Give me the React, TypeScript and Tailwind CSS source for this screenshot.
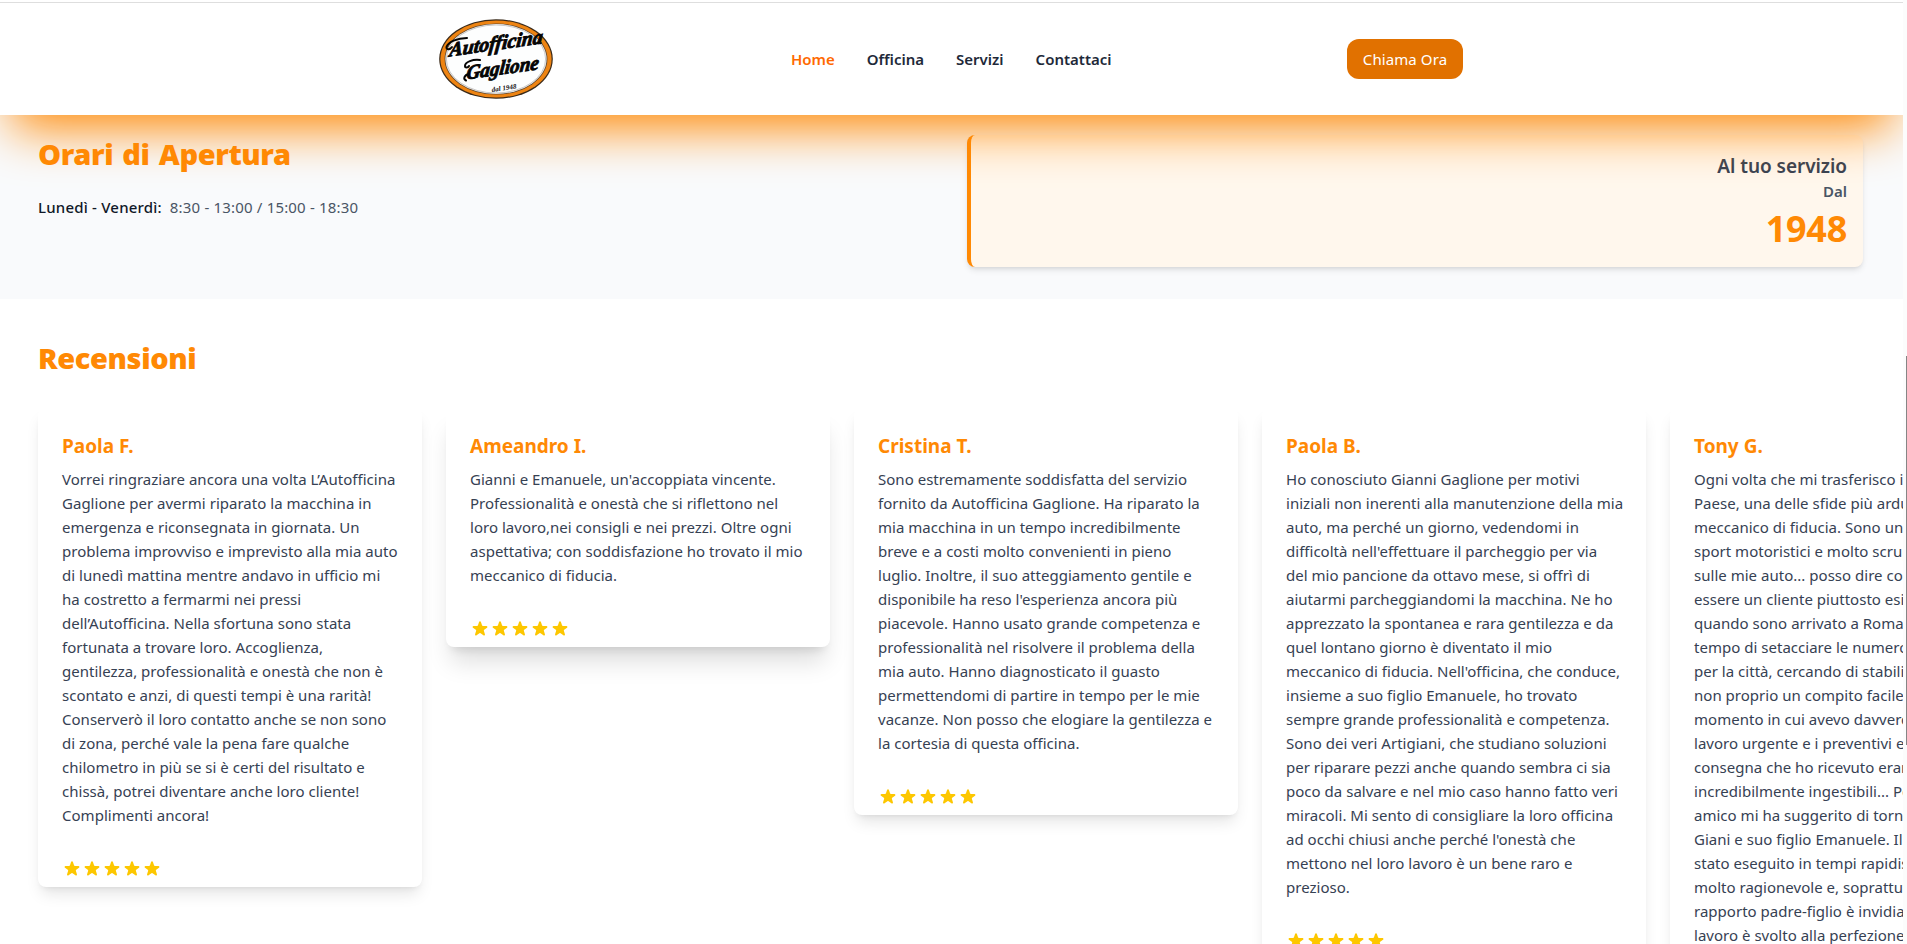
import React from "react";

const ORANGE = "text-[#ff8904]";

const reviews = [
  {
    name: "Paola F.",
    shadow: "shadow-lg",
    lines: [
      "Vorrei ringraziare ancora una volta L’Autofficina",
      "Gaglione per avermi riparato la macchina in",
      "emergenza e riconsegnata in giornata. Un",
      "problema improvviso e imprevisto alla mia auto",
      "di lunedì mattina mentre andavo in ufficio mi",
      "ha costretto a fermarmi nei pressi",
      "dell’Autofficina. Nella sfortuna sono stata",
      "fortunata a trovare loro. Accoglienza,",
      "gentilezza, professionalità e onestà che non è",
      "scontato e anzi, di questi tempi è una rarità!",
      "Conserverò il loro contatto anche se non sono",
      "di zona, perché vale la pena fare qualche",
      "chilometro in più se si è certi del risultato e",
      "chissà, potrei diventare anche loro cliente!",
      "Complimenti ancora!",
    ],
  },
  {
    name: "Ameandro I.",
    shadow: "shadow-[0_20px_25px_-5px_rgb(0_0_0/0.13),0_8px_10px_-6px_rgb(0_0_0/0.12)]",
    lines: [
      "Gianni e Emanuele, un'accoppiata vincente.",
      "Professionalità e onestà che si riflettono nel",
      "loro lavoro,nei consigli e nei prezzi. Oltre ogni",
      "aspettativa; con soddisfazione ho trovato il mio",
      "meccanico di fiducia.",
    ],
  },
  {
    name: "Cristina T.",
    shadow: "shadow-lg",
    lines: [
      "Sono estremamente soddisfatta del servizio",
      "fornito da Autofficina Gaglione. Ha riparato la",
      "mia macchina in un tempo incredibilmente",
      "breve e a costi molto convenienti in pieno",
      "luglio. Inoltre, il suo atteggiamento gentile e",
      "disponibile ha reso l'esperienza ancora più",
      "piacevole. Hanno usato grande competenza e",
      "professionalità nel risolvere il problema della",
      "mia auto. Hanno diagnosticato il guasto",
      "permettendomi di partire in tempo per le mie",
      "vacanze. Non posso che elogiare la gentilezza e",
      "la cortesia di questa officina.",
    ],
  },
  {
    name: "Paola B.",
    shadow: "shadow-lg",
    lines: [
      "Ho conosciuto Gianni Gaglione per motivi",
      "iniziali non inerenti alla manutenzione della mia",
      "auto, ma perché un giorno, vedendomi in",
      "difficoltà nell'effettuare il parcheggio per via",
      "del mio pancione da ottavo mese, si offrì di",
      "aiutarmi parcheggiandomi la macchina. Ne ho",
      "apprezzato la spontanea e rara gentilezza e da",
      "quel lontano giorno è diventato il mio",
      "meccanico di fiducia. Nell'officina, che conduce,",
      "insieme a suo figlio Emanuele, ho trovato",
      "sempre grande professionalità e competenza.",
      "Sono dei veri Artigiani, che studiano soluzioni",
      "per riparare pezzi anche quando sembra ci sia",
      "poco da salvare e nel mio caso hanno fatto veri",
      "miracoli. Mi sento di consigliare la loro officina",
      "ad occhi chiusi anche perché l'onestà che",
      "mettono nel loro lavoro è un bene raro e",
      "prezioso.",
    ],
  },
  {
    name: "Tony G.",
    shadow: "shadow-lg",
    lines: [
      "Ogni volta che mi trasferisco in un nuovo",
      "Paese, una delle sfide più ardue è trovare un",
      "meccanico di fiducia. Sono un amante degli",
      "sport motoristici e molto scrupoloso",
      "sulle mie auto... posso dire con certezza di",
      "essere un cliente piuttosto esigente",
      "quando sono arrivato a Roma non ho avuto",
      "tempo di setacciare le numerose officine",
      "per la città, cercando di stabilire un contatto",
      "non proprio un compito facile. In un",
      "momento in cui avevo davvero bisogno di un",
      "lavoro urgente e i preventivi e i tempi di",
      "consegna che ho ricevuto erano",
      "incredibilmente ingestibili... Per fortuna un",
      "amico mi ha suggerito di tornare da",
      "Giani e suo figlio Emanuele. Il lavoro è",
      "stato eseguito in tempi rapidissimi, a costo",
      "molto ragionevole e, soprattutto, il",
      "rapporto padre-figlio è invidiabile e il",
      "lavoro è svolto alla perfezione.",
    ],
  },
];

function Star() {
  return (
    <svg viewBox="0 0 20 20" className="size-5 fill-[#fdc700]">
      <path d="M9.049 2.927c.3-.921 1.603-.921 1.902 0l1.07 3.292a1 1 0 00.95.69h3.462c.969 0 1.371 1.24.588 1.81l-2.8 2.034a1 1 0 00-.364 1.118l1.07 3.292c.3.921-.755 1.688-1.54 1.118l-2.8-2.034a1 1 0 00-1.175 0l-2.8 2.034c-.784.57-1.838-.197-1.539-1.118l1.07-3.292a1 1 0 00-.364-1.118L2.98 8.72c-.783-.57-.38-1.81.588-1.81h3.461a1 1 0 00.951-.69l1.07-3.292z" />
    </svg>
  );
}

function Logo() {
  return (
    <svg viewBox="0 0 114 80" className="h-20 w-[114px]" fontFamily="'Liberation Serif', serif" fontWeight="700" fontStyle="italic">
      <ellipse cx="57" cy="40" rx="56.8" ry="39.8" fill="#3a2a1a" />
      <ellipse cx="57" cy="40" rx="55.6" ry="38.6" fill="#ee8412" />
      <ellipse cx="57" cy="40" rx="51.4" ry="35.6" fill="#5c4630" />
      <ellipse cx="57" cy="40" rx="50.6" ry="34.9" fill="#f4f2f0" />
      <ellipse cx="57" cy="40" rx="49.6" ry="34" fill="#fdfefe" stroke="#9a9a9a" strokeWidth="0.5" />
      <g fill="#050505" stroke="#050505" strokeWidth="0.9">
        <text fontSize="20" textLength="94" lengthAdjust="spacingAndGlyphs" transform="translate(10 37.5) rotate(-8) skewX(-14)">Autofficina</text>
        <text fontSize="20" textLength="73" lengthAdjust="spacingAndGlyphs" transform="translate(27 60.5) rotate(-8) skewX(-14)">Gaglione</text>
      </g>
      <g fill="none" stroke="#050505" strokeWidth="2" strokeLinecap="round">
        <path d="M28 19C18 19 9 23 7.500 28C7 31 11 31 13 28" />
        <path d="M41 41C34 40 26 43 26 47C26 49 29 49 30 47" />
        <path d="M30 55C25 56 24 60 27 61.500" />
      </g>
      <text fontSize="7" fill="#111" textLength="25" transform="translate(53 73) rotate(-8)">dal 1948</text>
    </svg>
  );
}

export default function App() {
  return (
    <div className="flex h-[944px] w-[1907px] overflow-hidden bg-white font-['Noto_Sans','Open_Sans',sans-serif] text-[15px]">
      <div className="flex h-full w-[1903px] flex-col overflow-hidden">
        <header className="relative z-10 flex h-[115px] shrink-0 flex-col bg-white pt-0.5 shadow-[0_25px_50px_-12px_#ff8904]">
          <div className="h-px bg-[#dedede]" />
          <div className="flex h-28 items-center pl-[439px]">
            <div className="w-[352px]">
              <Logo />
            </div>
            <nav className="flex w-[556px] items-center gap-8 font-semibold text-[#1e2939]">
              <a className="text-[#ff6900]">Home</a>
              <a>Officina</a>
              <a>Servizi</a>
              <a>Contattaci</a>
            </nav>
            <button className="h-10 w-[116px] rounded-xl bg-[#e17100] tracking-[0.1px] whitespace-nowrap text-white">Chiama Ora</button>
          </div>
        </header>

        <section className="grid h-[184px] shrink-0 grid-cols-2 gap-8 bg-[#f9fafc] pt-5 pr-10 pb-8 pl-[38px]">
          <div className="-mt-px">
            <h2 className={`text-[29px] leading-10 font-black tracking-[-0.4px] [word-spacing:2px] ${ORANGE}`}>Orari di Apertura</h2>
            <p className="mt-[21px] leading-6 text-[#4a5565]">
              <span className="mr-2 font-medium tracking-[0.2px] text-[#101828]">Lunedì - Venerdì:</span>
              <span className="tracking-[0.18px]">8:30 - 13:00 / 15:00 - 18:30</span>
            </p>
          </div>
          <div className="flex flex-col items-end rounded-lg border-l-4 border-[#ff8904] bg-[#fff7ed] p-4 shadow-md">
            <p className="mt-px text-[19px] leading-7 font-semibold tracking-[-0.05px] text-[#364153]">Al tuo servizio</p>
            <p className="-mt-px leading-6 font-semibold text-[#4a5565]">Dal</p>
            <p className={`mt-1.5 text-4xl leading-10 font-bold tracking-[-0.25px] ${ORANGE}`}>1948</p>
          </div>
        </section>

        <section className="flex min-h-0 flex-1 flex-col pt-[39px] pl-[38px]">
          <h2 className={`text-[29px] leading-10 font-black tracking-[-0.4px] ${ORANGE}`}>Recensioni</h2>
          <div className="mt-[30px] flex items-start gap-6">
            {reviews.map((r) => (
              <article key={r.name} className={`w-96 shrink-0 rounded-lg bg-white px-6 pt-6 pb-2 ${r.shadow}`}>
                <h3 className={`text-[19px] leading-7 font-bold ${ORANGE}`}>{r.name}</h3>
                <p className="mt-[7px] tracking-[0.02px] text-[#364153]">
                  {r.lines.map((line) => (
                    <span key={line} className="block leading-6 whitespace-nowrap">{line}</span>
                  ))}
                </p>
                <div className="mt-8 flex">
                  <Star />
                  <Star />
                  <Star />
                  <Star />
                  <Star />
                </div>
              </article>
            ))}
          </div>
        </section>
      </div>
      <div className="flex h-full w-1 justify-end bg-[#fcfcfc] pt-[356px]">
        <div className="h-[389px] w-px bg-[#858585]" />
      </div>
    </div>
  );
}
